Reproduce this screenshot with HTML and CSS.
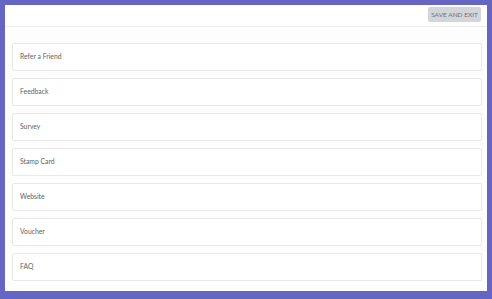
FILE: index.html
```html
<!DOCTYPE html>
<html>
  <head>
    <link rel="stylesheet" href="styles.css">
  </head>
  <body>
    <div class="panel">
      <div class="header">
        <button class="save-button">SAVE AND EXIT</button>
      </div>
      <div class="module-list">
        <div class="module-card">Refer a Friend</div>
        <div class="module-card">Feedback</div>
        <div class="module-card">Survey</div>
        <div class="module-card">Stamp Card</div>
        <div class="module-card">Website</div>
        <div class="module-card">Voucher</div>
        <div class="module-card">FAQ</div>
      </div>
    </div>
  </body>
</html>
```

FILE: styles.css
```css
html,
body {
  height: 100%;
}
body {
  margin: 0;
  padding: 5px 5px 8px 5px;
  box-sizing: border-box;
  background-color: #6466c2;
  font-family: Lato, "Liberation Sans", sans-serif;
}
.panel {
  height: 100%;
  background-color: #fdfdfd;
  display: flex;
  flex-direction: column;
}
.header {
  height: 22px;
  box-sizing: border-box;
  border-bottom: 1px solid #ededed;
  background-color: #ffffff;
  display: flex;
  justify-content: flex-end;
  align-items: flex-start;
  padding: 2px 6px 0 0;
}
.save-button {
  height: 15px;
  width: 53px;
  padding: 0;
  border: none;
  border-radius: 2px;
  background-color: #d3d5da;
  color: #6e717a;
  font-family: inherit;
  font-size: 6.5px;
  cursor: pointer;
}
.module-list {
  display: flex;
  flex-direction: column;
  gap: 7px;
  padding: 16px 5px 0 7px;
}
.module-card {
  height: 28px;
  box-sizing: border-box;
  border: 1px solid #e9e9e9;
  border-radius: 2px;
  background-color: #ffffff;
  display: flex;
  align-items: center;
  padding: 0 0 2px 7px;
  font-size: 6.8px;
  color: #626262;
}
```
